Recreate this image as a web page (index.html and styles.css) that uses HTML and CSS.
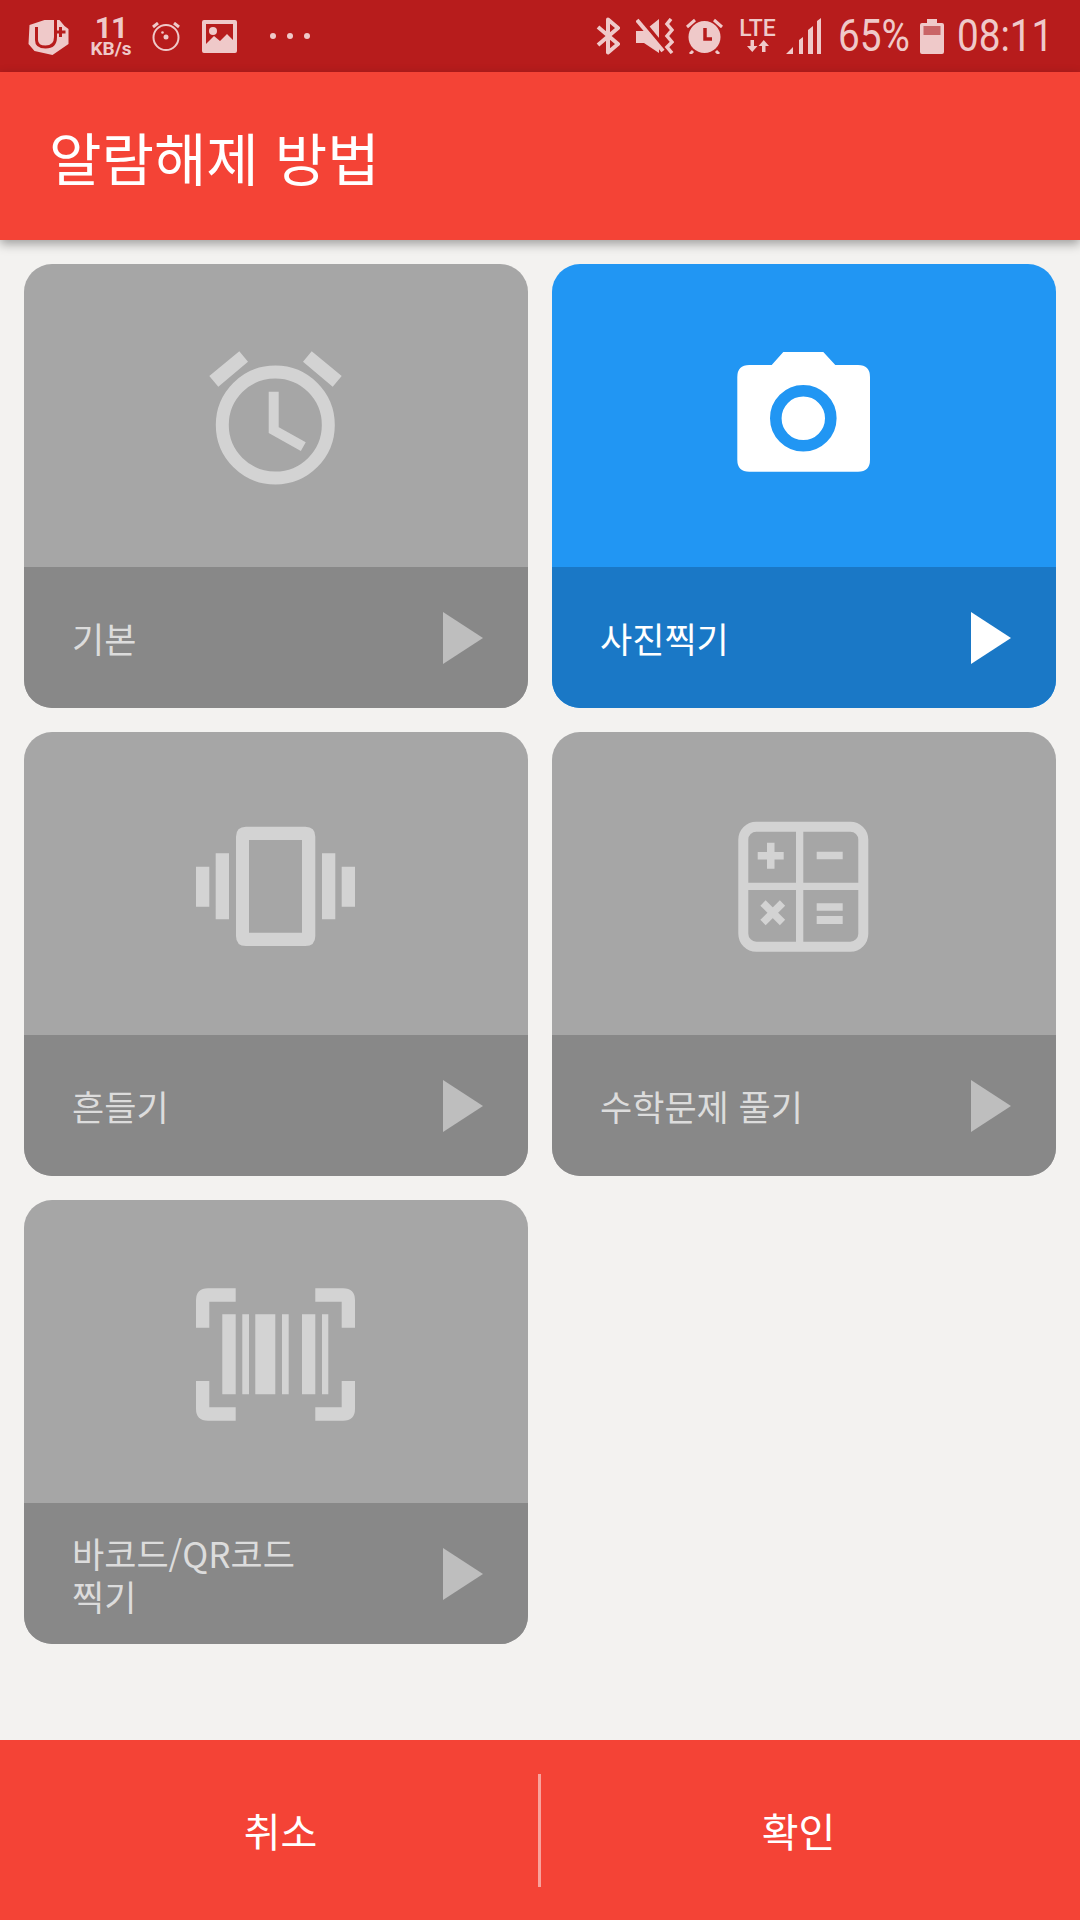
FILE: index.html
```html
<!DOCTYPE html>
<html lang="ko">
<head>
    <meta charset="UTF-8">
    <meta name="viewport" content="width=device-width, initial-scale=1.0">
    <title>알람해제 방법</title>
    <link rel="stylesheet" href="styles.css">
</head>
<body>
    <!-- status bar -->
    <div class="status-bar">
        <div class="status-group">
            <svg class="st-logo" width="43" height="37" viewBox="0 0 40 37">
                <path class="st-fill" d="M1 7 L16 2 H31 L36 8 L40 11 V26 L24 37 L6 33 L0 26Z"/>
                <path class="st-cut" d="M8 9 V22 Q8 29 17 29 Q27 29 27 19 V2" fill="none" stroke-width="3"/>
                <path class="st-cut" d="M32 9 V19 M27 14 H37" fill="none" stroke-width="3"/>
            </svg>
            <div class="st-speed">
                <span class="st-speed-num">11</span>
                <span class="st-speed-unit">KB/s</span>
            </div>
            <svg class="st-alarm" width="28" height="29" viewBox="0 0 28 29">
                <circle class="st-line" cx="14" cy="15.500" r="12.500" stroke-width="2"/>
                <path class="st-line" d="M1 5 L6 1 M27 5 L22 1" stroke-width="3"/>
                <circle class="st-fill" cx="14" cy="15" r="2.500"/>
                <circle class="st-fill" cx="10.500" cy="10.500" r="1.300"/>
            </svg>
            <svg class="st-image" width="35" height="33" viewBox="0 0 35 33">
                <path class="st-fill" fill-rule="evenodd" d="M2 0 H33 Q35 0 35 2 V31 Q35 33 33 33 H2 Q0 33 0 31 V2 Q0 0 2 0Z M4 4 V24 L12 16 L18 21 L25 14 L31 20 V4Z"/>
                <circle class="st-fill" cx="11" cy="11" r="4"/>
            </svg>
            <div class="st-dots"><i></i><i></i><i></i></div>
        </div>
        <div class="status-group status-right">
            <svg class="st-bt" width="24" height="38" viewBox="0 0 24 38">
                <path class="st-line" d="M2 10 L22 27 L12 35.500 V2.500 L22 11 L2 28" stroke-width="4" stroke-linejoin="round"/>
            </svg>
            <svg class="st-mute" width="38" height="36" viewBox="0 0 38 36">
                <path class="st-fill" d="M0 13 H8 L23 1 V35 L8 25 H0Z"/>
                <path class="st-cut" d="M4 0 L32 34" fill="none" stroke-width="4"/>
                <path class="st-line" d="M1 2 L27 33" stroke-width="4"/>
                <path class="st-line" d="M35 1 L31 6 L36 12 L31 18 L36 24 L31 29 L36 35" stroke-width="3.500"/>
            </svg>
            <svg class="st-alarm-on" width="37" height="36" viewBox="0 0 37 36">
                <circle class="st-fill" cx="18.500" cy="19" r="16"/>
                <path class="st-line" d="M1 9 L9 2 M36 9 L28 2 M7 33 L4 36 M30 33 L33 36" stroke-width="3"/>
                <path class="st-cut" d="M19 10 V21 H26" fill="none" stroke-width="3.500"/>
            </svg>
            <div class="st-lte">
                <span>LTE</span>
                <svg width="22" height="12" viewBox="0 0 22 12">
                    <path class="st-fill" d="M3.500 0 H7 V6 H10.500 L5.250 12 L0 6 H3.500Z M15 12 H18.500 V6 H22 L16.750 0 L11.500 6 H15Z"/>
                </svg>
            </div>
            <svg class="st-signal" width="36" height="37" viewBox="0 0 36 37">
                <path class="st-fill" d="M0 36 L7 29 V36Z M13 36 V22 L17 19 V36Z M22 36 V12 L27 8 V36Z M31 36 V3 L35 0 V36Z"/>
            </svg>
            <span class="st-text st-percent"><b>65%</b></span>
            <svg class="st-battery" width="24" height="35" viewBox="0 0 24 35">
                <path class="st-fill" d="M7 0 H17 V4 H22 Q24 4 24 6 V33 Q24 35 22 35 H2 Q0 35 0 33 V6 Q0 4 2 4 H7Z"/>
                <rect class="st-battery-empty" x="3.500" y="7" width="17" height="9"/>
            </svg>
            <span class="st-text st-time"><b>08:11</b></span>
        </div>
    </div>

    <div class="app-bar">알람해제 방법</div>

    <div class="content">
        <div class="card">
            <div class="card-top">
                <svg class="card-icon" width="200" height="200" viewBox="0 0 200 200">
                    <circle cx="99.300" cy="109" r="53" fill="none" stroke="currentColor" stroke-width="13"/>
                    <path d="M97.700 75.700 V114 L127.300 130.700" fill="none" stroke="currentColor" stroke-width="10"/>
                    <path fill="currentColor" d="M63.300 35.300 L72 45.700 L42.300 70.700 L33.300 60Z M135.700 35.300 L127 45.700 L156.700 70.700 L165.700 60Z"/>
                </svg>
            </div>
            <div class="card-bottom">
                <span class="card-label">기본</span>
                <svg class="card-arrow" width="40" height="52" viewBox="0 0 40 52"><path d="M0 0 L40 26 L0 52Z"/></svg>
            </div>
        </div>

        <div class="card card-active">
            <div class="card-top">
                <svg class="card-icon" width="200" height="200" viewBox="0 0 200 200">
                    <path fill="currentColor" d="M67.700 49 L79.300 36 H119.300 L131.300 49 H154 Q166 49 166 61 V143.700 Q166 155.700 154 155.700 H45.300 Q33.300 155.700 33.300 143.700 V61 Q33.300 49 45.300 49Z"/>
                    <circle cx="99.300" cy="102.300" r="27.500" fill="none" stroke="#2196f3" stroke-width="11.600"/>
                </svg>
            </div>
            <div class="card-bottom">
                <span class="card-label">사진찍기</span>
                <svg class="card-arrow" width="40" height="52" viewBox="0 0 40 52"><path d="M0 0 L40 26 L0 52Z"/></svg>
            </div>
        </div>

        <div class="card">
            <div class="card-top">
                <svg class="card-icon" width="200" height="200" viewBox="0 0 200 200">
                    <path fill="currentColor" fill-rule="evenodd" d="M70 42.700 H129.300 Q139.300 42.700 139.300 52.700 V152 Q139.300 162 129.300 162 H70 Q60 162 60 152 V52.700 Q60 42.700 70 42.700Z M73 56 V148.700 H126 V56Z"/>
                    <path fill="currentColor" d="M39.700 69.300 H53 V135.300 H39.700Z M20 82.700 H33.300 V122.700 H20Z M146 69.300 H159.300 V135.300 H146Z M165.700 82.700 H179 V122.700 H165.700Z"/>
                </svg>
            </div>
            <div class="card-bottom">
                <span class="card-label">흔들기</span>
                <svg class="card-arrow" width="40" height="52" viewBox="0 0 40 52"><path d="M0 0 L40 26 L0 52Z"/></svg>
            </div>
        </div>

        <div class="card">
            <div class="card-top">
                <svg class="card-icon" width="200" height="200" viewBox="0 0 200 200">
                    <rect x="39.300" y="42.700" width="120" height="120" rx="13" fill="none" stroke="currentColor" stroke-width="10"/>
                    <path fill="currentColor" d="M92 42 H99.300 V163 H92Z M39 98.700 H160 V106 H39Z"/>
                    <path fill="currentColor" d="M63 58.700 H70.500 V67.900 H79.700 V75.400 H70.500 V84.700 H63 V75.400 H53.700 V67.900 H63Z"/>
                    <path fill="currentColor" d="M112.700 67.700 H138.700 V75.300 H112.700Z M112.700 119.300 H138.700 V126.700 H112.700Z M112.700 132 H138.700 V140 H112.700Z"/>
                    <path d="M59 119 L78.500 138.500 M78.500 119 L59 138.500" fill="none" stroke="currentColor" stroke-width="7.500"/>
                </svg>
            </div>
            <div class="card-bottom">
                <span class="card-label">수학문제 풀기</span>
                <svg class="card-arrow" width="40" height="52" viewBox="0 0 40 52"><path d="M0 0 L40 26 L0 52Z"/></svg>
            </div>
        </div>

        <div class="card">
            <div class="card-top">
                <svg class="card-icon" width="200" height="200" viewBox="0 0 200 200">
                    <path fill="currentColor" d="M59.700 36.300 V49.700 H33.300 V75.700 H20 V48.300 Q20 36.300 32 36.300Z M139.300 36.300 V49.700 H165.700 V75.700 H179 V48.300 Q179 36.300 167 36.300Z M59.700 168.700 V155.300 H33.300 V129 H20 V156.700 Q20 168.700 32 168.700Z M139.300 168.700 V155.300 H165.700 V129 H179 V156.700 Q179 168.700 167 168.700Z"/>
                    <path fill="currentColor" d="M46.300 62.300 H59.700 V142.300 H46.300Z M66.300 62.300 H73 V142.300 H66.300Z M79.300 62.300 H99.300 V142.300 H79.300Z M106 62.300 H112.700 V142.300 H106Z M126 62.300 H139.300 V142.300 H126Z M146 62.300 H152.300 V142.300 H146Z"/>
                </svg>
            </div>
            <div class="card-bottom">
                <span class="card-label">바코드/QR코드 찍기</span>
                <svg class="card-arrow" width="40" height="52" viewBox="0 0 40 52"><path d="M0 0 L40 26 L0 52Z"/></svg>
            </div>
        </div>
    </div>

    <div class="footer">
        <button class="footer-btn">취소</button>
        <div class="footer-divider"></div>
        <button class="footer-btn">확인</button>
    </div>
</body>
</html>
```

FILE: styles.css
```css
* {
    box-sizing: border-box;
}
body {
    display: flex;
    flex-direction: column;
    width: 1080px;
    height: 1920px;
    margin: 0;
    overflow: hidden;
    background-color: #f3f2f0;
    font-family: "Noto Sans CJK KR", "Noto Sans", sans-serif;
}

/* status bar */
.status-bar {
    display: flex;
    justify-content: space-between;
    align-items: center;
    flex: none;
    height: 72px;
    padding: 0 30px 0 27px;
    background-color: #b71c1c;
    color: #efc9c9;
    font-family: Roboto, sans-serif;
}
.status-group {
    display: flex;
    align-items: center;
}
.st-fill {
    fill: #efc9c9;
}
.st-cut {
    stroke: #b71c1c;
}
.st-line {
    fill: none;
    stroke: #efc9c9;
}
.st-battery-empty {
    fill: #c96567;
}
.st-speed {
    display: flex;
    flex-direction: column;
    align-items: center;
    width: 42px;
    margin: 0 20px;
    font-weight: 700;
}
.st-speed-num {
    font-size: 30px;
    line-height: 26px;
    letter-spacing: -1px;
}
.st-speed-unit {
    font-size: 19px;
    line-height: 16px;
    white-space: nowrap;
}
.st-image {
    margin: 0 33px 0 22px;
}
.st-dots {
    display: flex;
    gap: 11px;
    width: 40px;
}
.st-dots i {
    width: 6px;
    height: 6px;
    border-radius: 50%;
    background-color: #efc9c9;
}
.st-bt {
    margin-right: 16px;
}
.st-mute {
    margin-right: 12px;
}
.st-alarm-on {
    margin-right: 16px;
}
.st-lte {
    display: flex;
    flex-direction: column;
    align-items: center;
    width: 37px;
    margin-right: 10px;
    gap: 3px;
}
.st-lte span {
    font-size: 23px;
    font-weight: 500;
    line-height: 17px;
}
.st-signal {
    margin-right: 16px;
}
.st-text {
    font-size: 45px;
    line-height: 50px;
    white-space: nowrap;
}
.st-text b {
    display: block;
    font-weight: 400;
    transform: scaleX(0.86);
    transform-origin: left center;
}
.st-percent {
    width: 69px;
    margin-right: 13px;
}
.st-battery {
    margin-right: 13px;
}
.st-time {
    width: 93px;
}

/* app bar */
.app-bar {
    position: relative;
    display: flex;
    align-items: center;
    flex: none;
    height: 168px;
    padding-left: 49px;
    background-color: #f44336;
    color: white;
    font-size: 57px;
    box-shadow: 0 4px 10px rgba(0, 0, 0, 0.35);
}

/* cards */
.content {
    display: grid;
    flex: 1;
    grid-template-columns: 504px 504px;
    grid-auto-rows: 444px;
    gap: 24px;
    padding: 24px;
}
.card {
    display: flex;
    flex-direction: column;
    overflow: hidden;
    border-radius: 28px;
    background-color: #a6a6a6;
}
.card-top {
    display: flex;
    align-items: center;
    justify-content: center;
    flex: 1;
    color: #d3d3d3;
}
.card-bottom {
    display: flex;
    align-items: center;
    justify-content: space-between;
    flex: none;
    height: 141px;
    padding: 0 45px 0 48px;
    background-color: #888888;
    color: #dcdcdc;
}
.card-label {
    width: 270px;
    font-size: 35px;
    line-height: 43px;
    word-break: keep-all;
}
.card-arrow {
    fill: #bebebe;
}
.card-active {
    background-color: #2196f3;
}
.card-active .card-top {
    color: white;
}
.card-active .card-bottom {
    background-color: #1a78c6;
    color: white;
}
.card-active .card-arrow {
    fill: white;
}

/* bottom buttons */
.footer {
    display: flex;
    align-items: center;
    flex: none;
    height: 180px;
    padding: 0 24px 0 23px;
    background-color: #f44336;
}
.footer-btn {
    flex: 1;
    padding: 0;
    border: none;
    background: none;
    color: white;
    font-family: inherit;
    font-size: 40px;
    font-weight: 400;
}
.footer-divider {
    flex: none;
    width: 3px;
    height: 113px;
    background-color: #f9a29c;
}
```
